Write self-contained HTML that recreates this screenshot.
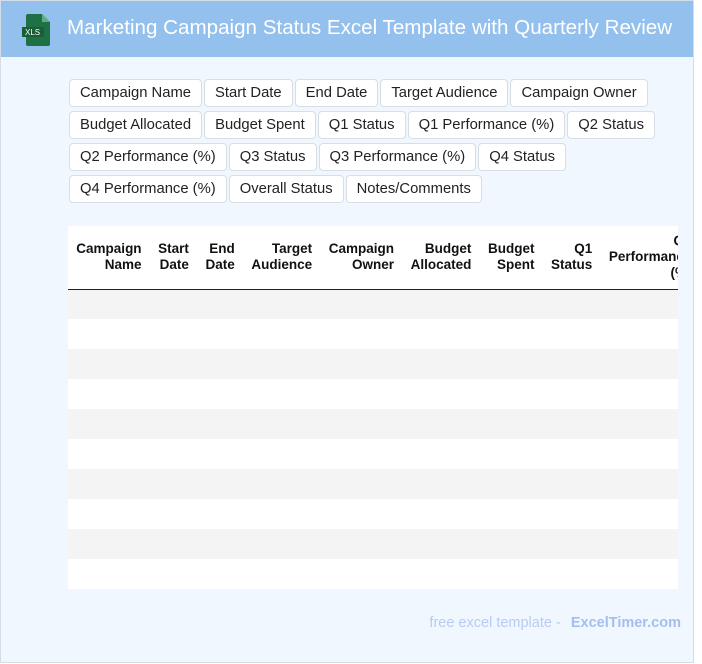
<!DOCTYPE html>
<html><head><meta charset="utf-8"><style>
*{box-sizing:border-box;margin:0;padding:0}
body{width:702px;height:664px;background:#fff;font-family:"Liberation Sans",Arial,sans-serif;position:relative;overflow:hidden}
.wrap{position:absolute;left:0;top:0;width:694px;height:663px;background:#f0f7ff;border:1px solid #d6dde6}
.hdr{position:absolute;left:0;top:0;width:692px;height:56px;background:#93c0ec}
.hdr h1{position:absolute;left:66px;top:15px;font-size:20.6px;font-weight:normal;color:#fff;white-space:nowrap}
.icon{position:absolute;left:21px;top:13px}
.tags{position:absolute;left:68px;top:78px;width:610px}
.tag{display:inline-block;height:28px;line-height:26px;padding:0 10px;margin:0 2px 4px 0;background:#fff;border:1px solid #d8dee6;border-radius:4px;font-size:14.8px;color:#222;white-space:nowrap;vertical-align:top}
.tbl{position:absolute;left:67px;top:225px;width:610px;height:363px;overflow:hidden;background:#fff}
table{border-collapse:collapse;white-space:nowrap}
th{font-size:13.5px;font-weight:bold;text-align:right;padding:0 8.3px;height:63px;border-bottom:1.5px solid #222;line-height:16px;color:#111}
td{height:30px}
tr.g td{background:#f4f4f4}
.foot{position:absolute;right:12px;top:614px;font-size:14.5px;color:#b7cbf3}
.foot b{color:#a6bdf0;margin-left:6px}
</style></head><body>
<div class="wrap">
<div class="hdr">
<svg class="icon" width="30" height="32" viewBox="0 0 30 32"><path d="M6 0h14l8 8v22a2 2 0 0 1-2 2H6a2 2 0 0 1-2-2V2a2 2 0 0 1 2-2z" fill="#1e7145"/><path d="M20 0v8h8z" fill="#5fae7f"/><rect x="0" y="13" width="22" height="10" fill="#1a5e38"/><text x="3" y="21" font-size="8" fill="#fff" font-family="Liberation Sans">XLS</text></svg>
<h1>Marketing Campaign Status Excel Template with Quarterly Review</h1>
</div>
<div class="tags">
<span class="tag">Campaign Name</span><span class="tag">Start Date</span><span class="tag">End Date</span><span class="tag">Target Audience</span><span class="tag">Campaign Owner</span><span class="tag">Budget Allocated</span><span class="tag">Budget Spent</span><span class="tag">Q1 Status</span><span class="tag">Q1 Performance (%)</span><span class="tag">Q2 Status</span><span class="tag">Q2 Performance (%)</span><span class="tag">Q3 Status</span><span class="tag">Q3 Performance (%)</span><span class="tag">Q4 Status</span><span class="tag">Q4 Performance (%)</span><span class="tag">Overall Status</span><span class="tag">Notes/Comments</span>
</div>
<div class="tbl"><table>
<tr><th>Campaign<br>Name</th><th>Start<br>Date</th><th>End<br>Date</th><th>Target<br>Audience</th><th>Campaign<br>Owner</th><th>Budget<br>Allocated</th><th>Budget<br>Spent</th><th>Q1<br>Status</th><th>Q1<br>Performance<br>(%)</th><th>Q2<br>Status</th><th>Q2<br>Performance</th></tr>
<tr class="g"><td colspan="11"></td></tr><tr><td colspan="11"></td></tr>
<tr class="g"><td colspan="11"></td></tr><tr><td colspan="11"></td></tr>
<tr class="g"><td colspan="11"></td></tr><tr><td colspan="11"></td></tr>
<tr class="g"><td colspan="11"></td></tr><tr><td colspan="11"></td></tr>
<tr class="g"><td colspan="11"></td></tr><tr><td colspan="11"></td></tr>
</table></div>
<div class="foot">free excel template - <b>ExcelTimer.com</b></div>
</div>
</body></html>
